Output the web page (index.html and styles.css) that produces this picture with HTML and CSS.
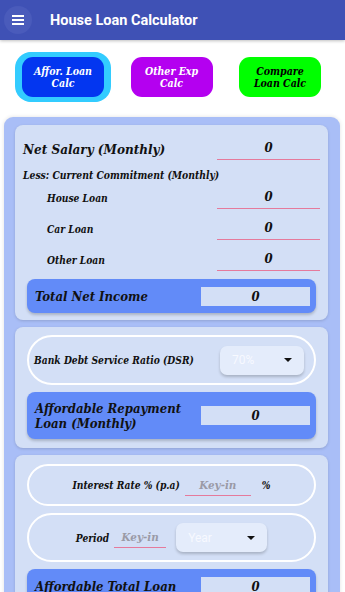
FILE: index.html
```html
<!DOCTYPE html>
<html lang="en">
<head>
  <meta charset="UTF-8" />
  <meta name="viewport" content="width=device-width, initial-scale=1.0"/>
  <title>House Loan Calculator</title>
  <link rel="stylesheet" href="styles.css">
</head>
<body>
  <header class="appbar">
    <button class="menu-btn" aria-label="Menu">
      <svg width="14" height="12" viewBox="0 0 14 12"><path d="M1 2h12M1 6h12M1 10h12" stroke="#fff" stroke-width="2"/></svg>
    </button>
    <div class="appbar-title">House Loan Calculator</div>
  </header>

  <nav class="tabs">
    <button class="tab tab-blue active">Affor. Loan<br>Calc</button>
    <button class="tab tab-purple">Other Exp<br>Calc</button>
    <button class="tab tab-green">Compare<br>Loan Calc</button>
  </nav>

  <main class="outer">
    <section class="card">
      <div class="field field-main">
        <div class="label">Net Salary (Monthly)</div>
        <div class="input">0</div>
      </div>
      <div class="sub-title">Less: Current Commitment (Monthly)</div>
      <div class="field field-sub">
        <div class="label">House Loan</div>
        <div class="input">0</div>
      </div>
      <div class="field field-sub">
        <div class="label">Car Loan</div>
        <div class="input">0</div>
      </div>
      <div class="field field-sub">
        <div class="label">Other Loan</div>
        <div class="input">0</div>
      </div>
      <div class="result">
        <div class="result-label">Total Net Income</div>
        <div class="result-value">0</div>
      </div>
    </section>

    <section class="card card-dsr">
      <div class="pill pill-dsr">
        <div class="small-label">Bank Debt Service Ratio (DSR)</div>
        <div class="dropdown dd-dsr"><span>70%</span><i class="caret"></i></div>
      </div>
      <div class="result result-tall">
        <div class="result-label">Affordable Repayment<br>Loan (Monthly)</div>
        <div class="result-value">0</div>
      </div>
    </section>

    <section class="card card-loan">
      <div class="pill pill-rate">
        <div class="small-label">Interest Rate % (p.a)</div>
        <div class="keyin keyin-rate">Key-in</div>
        <div class="small-label pct">%</div>
      </div>
      <div class="pill pill-period">
        <div class="small-label">Period</div>
        <div class="keyin keyin-period">Key-in</div>
        <div class="dropdown dd-year"><span>Year</span><i class="caret"></i></div>
      </div>
      <div class="result">
        <div class="result-label">Affordable Total Loan</div>
        <div class="result-value">0</div>
      </div>
    </section>
  </main>
</body>
</html>
```

FILE: styles.css
```css
body {
  margin: 0;
  background: #ffffff;
  font-family: "DejaVu Serif Condensed", "DejaVu Serif", serif;
  font-weight: bold;
  font-style: italic;
  color: #111;
}
.appbar {
  height: 40px;
  background: #3f51b5;
  display: flex;
  align-items: center;
  box-shadow: 0 1px 3px rgba(0,0,0,0.25);
}
.menu-btn {
  width: 28px;
  height: 28px;
  margin-left: 4px;
  border: none;
  border-radius: 50%;
  background: #4a5bbb;
  display: flex;
  align-items: center;
  justify-content: center;
  padding: 0;
}
.appbar-title {
  margin-left: 18px;
  color: #fff;
  font-family: Roboto, sans-serif;
  font-style: normal;
  font-weight: bold;
  font-size: 14.5px;
}
.tabs {
  display: flex;
  justify-content: space-between;
  padding: 17px 24px 0 22px;
  height: 40px;
}
.tab {
  width: 82px;
  height: 40px;
  border: none;
  border-radius: 11px;
  font-family: inherit;
  font-weight: bold;
  font-style: italic;
  font-size: 10.5px;
  line-height: 12px;
  color: #fff;
  padding: 0;
}
.tab-blue { background: #0336f0; }
.tab-blue.active { box-shadow: 0 0 0 5px #33ccff, -2px 0 0 5px #33ccff, 2px 0 0 5px #33ccff; }
.tab-purple { background: #b400f0; }
.tab-green { background: #00ff00; color: #000; }

.outer {
  margin: 20px 5px 0 4px;
  padding: 8px 12px 8px 11px;
  background: #a9bef7;
  border-radius: 9px;
  box-shadow: 0 0 4px rgba(0,0,0,0.12);
}
.card {
  background: #d3dff6;
  border-radius: 8px;
  padding: 10px 12px 7px 12px;
  margin-bottom: 7px;
  box-shadow: 0 1px 3px rgba(0,0,0,0.15);
}
.field {
  display: flex;
  align-items: center;
  justify-content: space-between;
}
.field .input {
  width: 103px;
  height: 22px;
  line-height: 22px;
  text-align: center;
  border-bottom: 1px solid #e57a9c;
  font-size: 13px;
  margin-right: -4px;
}
.field-main {
  margin-left: -4px;
  margin-top: 2px;
}
.field-main .label { font-size: 13.4px; }
.sub-title {
  margin: 7px 0 3px -4px;
  font-size: 10.3px;
  height: 16px;
  line-height: 16px;
}
.field-sub { margin-bottom: 8px; }
.field-sub .label {
  font-size: 10.2px;
  padding-left: 20px;
}
.result {
  margin: 8px 0 0 0;
  height: 34px;
  background: #628bf8;
  border-radius: 8px;
  display: flex;
  align-items: center;
  justify-content: space-between;
  padding: 0 6px 0 8px;
  box-shadow: 0 2px 3px rgba(0,0,0,0.2);
}
.result-label {
  font-size: 13px;
  line-height: 15px;
}
.result-value {
  width: 109px;
  height: 19px;
  line-height: 19px;
  background: #d3dff6;
  text-align: center;
  font-size: 13px;
}
.result-tall {
  height: 47px;
  margin-top: 7px;
}
.card-dsr { padding-bottom: 9px; }
.card-loan { padding-top: 11px; }
.pill {
  border: 2px solid #fff;
  border-radius: 30px;
  display: flex;
  align-items: center;
  box-sizing: border-box;
}
.pill-dsr {
  margin-top: -2px;
  height: 50px;
  justify-content: space-between;
  padding: 0 10px 0 5px;
}
.pill-rate {
  margin-top: -2px;
  height: 42px;
  justify-content: center;
  gap: 5px;
}
.pill-period {
  margin-top: 7px;
  margin-bottom: -1px;
  height: 49px;
  justify-content: center;
  gap: 5px;
}
.small-label { font-size: 10.2px; }
.pct { margin-left: 6px; }
.keyin {
  color: #9a9aa6;
  font-size: 11.5px;
  text-align: center;
  border-bottom: 1px solid #e57a9c;
  height: 20px;
  line-height: 20px;
}
.keyin-rate { width: 66px; }
.keyin-period { width: 52px; margin-right: 5px; }
.dropdown {
  background: #e4ecfb;
  border-radius: 7px;
  box-shadow: 0 2px 3px rgba(0,0,0,0.2);
  height: 29px;
  display: flex;
  align-items: center;
  justify-content: space-between;
  padding: 0 12px;
  box-sizing: border-box;
  font-family: Roboto, sans-serif;
  font-style: normal;
  font-weight: normal;
  font-size: 12px;
  color: #f7f9ff;
}
.dd-dsr { width: 84px; }
.dd-year { width: 91px; }
.caret {
  width: 0;
  height: 0;
  border-left: 4px solid transparent;
  border-right: 4px solid transparent;
  border-top: 4px solid #111;
}
```
